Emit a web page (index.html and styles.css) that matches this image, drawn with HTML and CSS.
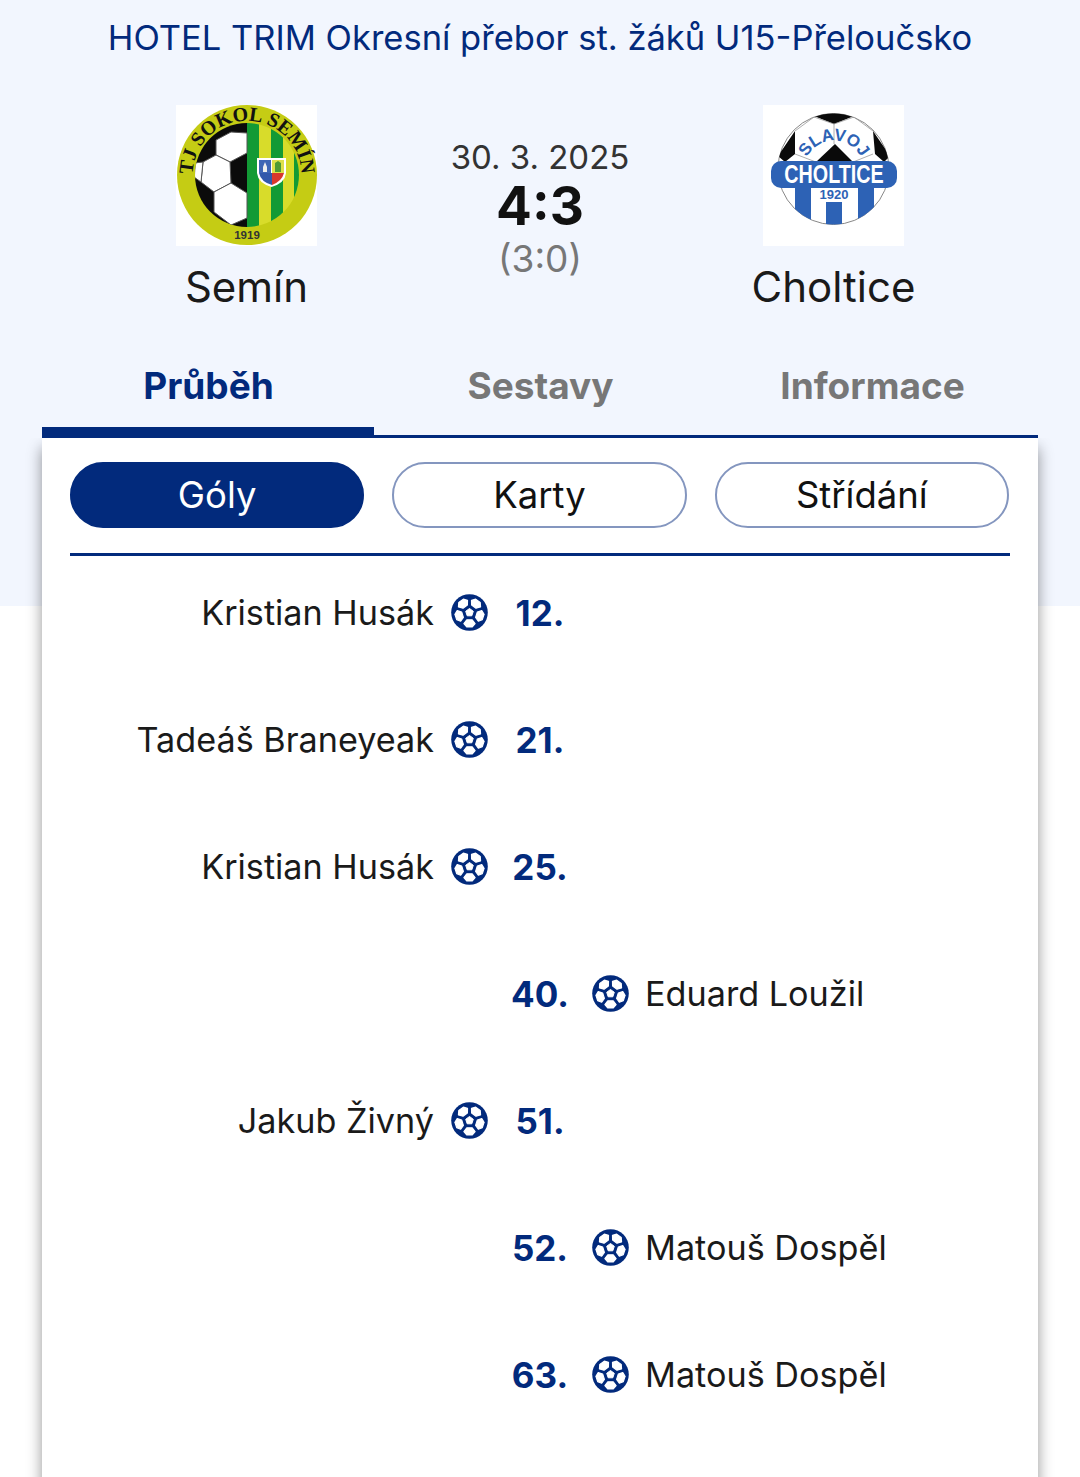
FILE: index.html
```html
<!DOCTYPE html>
<html lang="cs">
<head>
<meta charset="utf-8">
<title>Semín - Choltice</title>
<link rel="stylesheet" href="styles.css">
</head>
<body>
<svg class="defs" width="0" height="0" aria-hidden="true">
  <symbol id="ball" viewBox="0 0 37 37">
    <circle cx="18.5" cy="18.5" r="18.300" fill="#022a7c"/>
    <path d="M18.500 14.500l3.800 2.800-1.500 4.500h-4.600l-1.500-4.500z" fill="#fff" stroke="#fff" stroke-linejoin="round"/>
    <g fill="#fff" stroke="#fff" stroke-width="1.200" stroke-linejoin="round">
      <path d="M15.800 11.200h5.400l2.900-3.800-2.800-3.300h-5.600l-2.800 3.300z" transform="rotate(36 18.500 18.500)"/>
      <path d="M15.800 11.200h5.400l2.900-3.800-2.800-3.300h-5.600l-2.800 3.300z" transform="rotate(108 18.500 18.500)"/>
      <path d="M15.800 11.200h5.400l2.900-3.800-2.800-3.300h-5.600l-2.800 3.300z" transform="rotate(180 18.500 18.500)"/>
      <path d="M15.800 11.200h5.400l2.900-3.800-2.800-3.300h-5.600l-2.800 3.300z" transform="rotate(252 18.500 18.500)"/>
      <path d="M15.800 11.200h5.400l2.900-3.800-2.800-3.300h-5.600l-2.800 3.300z" transform="rotate(324 18.500 18.500)"/>
    </g>
  </symbol>
</svg>

<header class="hero">
  <h1 class="league">HOTEL TRIM Okresní přebor st. žáků U15-Přeloučsko</h1>
  <div class="match">
    <div class="team">
      <svg class="logo" viewBox="0 0 141 141" role="img" aria-label="TJ Sokol Semín">
        <rect width="141" height="141" fill="#fff"/>
        <defs>
          <clipPath id="inner"><circle cx="71" cy="70" r="52"/></clipPath>
          <path id="arcA" d="M17.500 80A54.400 54.400 0 1 1 124.500 80" fill="none"/>
        </defs>
        <circle cx="71" cy="70" r="70" fill="#c5cc14"/>
        <g clip-path="url(#inner)">
          <rect x="15" y="15" width="56" height="110" fill="#0b0b0b"/>
          <rect x="71" y="15" width="55" height="110" fill="#d8dc2a"/>
          <rect x="71" y="15" width="12" height="110" fill="#129a35"/>
          <rect x="95" y="15" width="12" height="110" fill="#129a35"/>
          <rect x="118" y="15" width="6" height="110" fill="#129a35"/>
          <g fill="#fff" stroke="#555" stroke-width="1">
            <path d="M40 35l15-8 16 1v20l-17 9-14-7z"/>
            <path d="M27 57l13-7 14 7 1 21-17 9-13-10z"/>
            <path d="M38 87l17-9 16 10v25l-16 7-17-13z"/>
            <path d="M18 58l9-1-2 20-7-5z"/>
          </g>
        </g>
        <path d="M81 53h29v15q-1 10-14.500 14Q82 78 81 68z" fill="#fff"/>
        <path d="M83 55h12v13h-12z" fill="#3f66b5"/>
        <path d="M96 55h12v13h-12z" fill="#dde04a"/>
        <path d="M96 68h12q-2 8-12 12z" fill="#d8382d"/>
        <path d="M83 68h13v12q-11-3-13-12z" fill="#3258ab"/>
        <path d="M87 62l2-5 2 5v5h-4z" fill="#eee"/>
        <path d="M99 58l3-2 3 2v9h-6z" fill="#4d9b33"/>
        <text class="logo-ring"><textPath href="#arcA" startOffset="50%" text-anchor="middle">TJ SOKOL SEMÍN</textPath></text>
        <text class="logo-year" x="71" y="134" text-anchor="middle">1919</text>
      </svg>
      <div class="team-name">Semín</div>
    </div>
    <div class="score">
      <div class="date">30. 3. 2025</div>
      <div class="result">4:3</div>
      <div class="half">(3:0)</div>
    </div>
    <div class="team">
      <svg class="logo" viewBox="0 0 141 141" role="img" aria-label="Slavoj Choltice 1920">
        <rect width="141" height="141" fill="#fff"/>
        <defs>
          <clipPath id="disc"><circle cx="70.500" cy="64" r="55.500"/></clipPath>
          <path id="arcB" d="M41 65.500A30 30 0 0 1 101 65.500" fill="none"/>
        </defs>
        <circle cx="70.500" cy="64" r="55.500" fill="#fff" stroke="#888" stroke-width="1"/>
        <g clip-path="url(#disc)">
          <path d="M50 5h41v6l-20 8-20-8z" fill="#0a0a0a"/>
          <path d="M32 26l-17 25 7 6 10-8zM110 26l17 25-6 6-9-8z" fill="#0a0a0a"/>
          <path d="M72 39L53 57h37z" fill="#0a0a0a"/>
          <path d="M32 26l19-14 20 7v20M110 26L91 12 71 19M32 49l21 8M110 49l-20 8" fill="none" stroke="#999" stroke-width=".8"/>
          <path d="M32 80h16v44h-16zM95 80h16v44h-16zM63 97h16v27h-16z" fill="#2d62b5"/>
        </g>
        <rect x="8" y="56" width="126" height="27" rx="10" fill="#2d62b5"/>
        <text class="logo-name" transform="translate(71 78) scale(.79 1)" text-anchor="middle">CHOLTICE</text>
        <text class="logo-founded" x="71" y="94" text-anchor="middle">1920</text>
        <text class="logo-arc"><textPath href="#arcB" startOffset="50%" text-anchor="middle">SLAVOJ</textPath></text>
      </svg>
      <div class="team-name">Choltice</div>
    </div>
  </div>
</header>

<main class="content">
  <nav class="tabs">
    <div class="tab tab-active">Průběh</div>
    <div class="tab">Sestavy</div>
    <div class="tab">Informace</div>
  </nav>
  <section class="card">
    <div class="filters">
      <div class="pill pill-active">Góly</div>
      <div class="pill">Karty</div>
      <div class="pill">Střídání</div>
    </div>
    <div class="events">
      <div class="event">
        <div class="side side-home"><span>Kristian Husák</span><svg class="ball"><use href="#ball"/></svg></div>
        <div class="minute">12.</div>
        <div class="side"></div>
      </div>
      <div class="event">
        <div class="side side-home"><span>Tadeáš Braneyeak</span><svg class="ball"><use href="#ball"/></svg></div>
        <div class="minute">21.</div>
        <div class="side"></div>
      </div>
      <div class="event">
        <div class="side side-home"><span>Kristian Husák</span><svg class="ball"><use href="#ball"/></svg></div>
        <div class="minute">25.</div>
        <div class="side"></div>
      </div>
      <div class="event">
        <div class="side"></div>
        <div class="minute">40.</div>
        <div class="side side-away"><svg class="ball"><use href="#ball"/></svg><span>Eduard Loužil</span></div>
      </div>
      <div class="event">
        <div class="side side-home"><span>Jakub Živný</span><svg class="ball"><use href="#ball"/></svg></div>
        <div class="minute">51.</div>
        <div class="side"></div>
      </div>
      <div class="event">
        <div class="side"></div>
        <div class="minute">52.</div>
        <div class="side side-away"><svg class="ball"><use href="#ball"/></svg><span>Matouš Dospěl</span></div>
      </div>
      <div class="event">
        <div class="side"></div>
        <div class="minute">63.</div>
        <div class="side side-away"><svg class="ball"><use href="#ball"/></svg><span>Matouš Dospěl</span></div>
      </div>
    </div>
  </section>
</main>
</body>
</html>
```
FILE: styles.css
```css
* { box-sizing: border-box; }
html, body { margin: 0; padding: 0; }
body {
  width: 1080px;
  height: 1477px;
  overflow: hidden;
  background: #fff;
  font-family: "Inter", "Liberation Sans", sans-serif;
  color: #1a1a1a;
  position: relative;
}
.defs { position: absolute; }
.hero {
  background: #f2f6fe;
  height: 606px;
  padding-top: 16px;
}
.league {
  margin: 0;
  font-size: 34.500px;
  line-height: 44px;
  font-weight: 400;
  color: #022a7c;
  text-align: center;
  white-space: nowrap;
}
.match {
  display: grid;
  grid-template-columns: 141px 1fr 141px;
  margin: 45px 176px 0;
}
.team { display: flex; flex-direction: column; align-items: center; }
.logo { width: 141px; height: 141px; display: block; }
.team-name {
  margin-top: 16px;
  font-size: 42px;
  line-height: 50px;
  white-space: nowrap;
}
.score { display: flex; flex-direction: column; align-items: center; padding-top: 32px; }
.date { font-size: 33px; line-height: 40px; color: #333; }
.result { font-size: 53px; line-height: 56px; font-weight: 700; color: #111; margin-top: 1px; }
.half { font-size: 37px; line-height: 42px; color: #777; margin-top: 4px; }
.logo-ring { font: 700 20px "Liberation Serif", serif; fill: #111; }
.logo-year { font: 700 11.500px "Liberation Sans", sans-serif; fill: #333; }
.logo-name { font: 700 25px "Liberation Sans", sans-serif; fill: #fff; }
.logo-founded { font: 700 13px "Liberation Sans", sans-serif; fill: #2d62b5; }
.logo-arc { font: 700 17px "Liberation Sans", sans-serif; fill: #2d62b5; }

.content {
  position: absolute;
  left: 42px;
  top: 340px;
  width: 996px;
}
.tabs {
  display: grid;
  grid-template-columns: repeat(3, 1fr);
  border-bottom: 3px solid #022a7c;
  height: 98px;
}
.tab {
  font-size: 37px;
  font-weight: 700;
  color: #777;
  text-align: center;
  padding-top: 23px;
  padding-left: 1px;
  line-height: 46px;
}
.tab-active {
  color: #022a7c;
  box-shadow: inset 0 -8px 0 #022a7c;
}
.card {
  background: #fff;
  height: 1100px;
  padding: 24px 28px 0;
  box-shadow: 0 10px 14px rgba(0, 0, 0, .42);
  clip-path: inset(0 -30px 0 -30px);
}
.filters {
  display: grid;
  grid-template-columns: repeat(3, 1fr);
  gap: 28px;
  padding-right: 1px;
  padding-bottom: 25px;
  border-bottom: 3px solid #022a7c;
}
.pill {
  height: 66px;
  border: 2.500px solid #8496bf;
  border-radius: 33px;
  font-size: 36.500px;
  line-height: 62px;
  text-align: center;
  color: #111;
}
.pill-active {
  background: #022a7c;
  border-color: #022a7c;
  color: #fff;
}
.event {
  display: grid;
  grid-template-columns: 1fr 104px 1fr;
  align-items: center;
  height: 127px;
}
.events { margin-top: -7px; }
.side {
  display: flex;
  align-items: center;
  gap: 17px;
  font-size: 34.200px;
  white-space: nowrap;
}
.side-home { justify-content: flex-end; }
.side-away { gap: 16px; }
.minute {
  font-size: 35px;
  font-weight: 700;
  color: #022a7c;
  text-align: center;
}
.ball { width: 37px; height: 37px; flex: none; }
```
